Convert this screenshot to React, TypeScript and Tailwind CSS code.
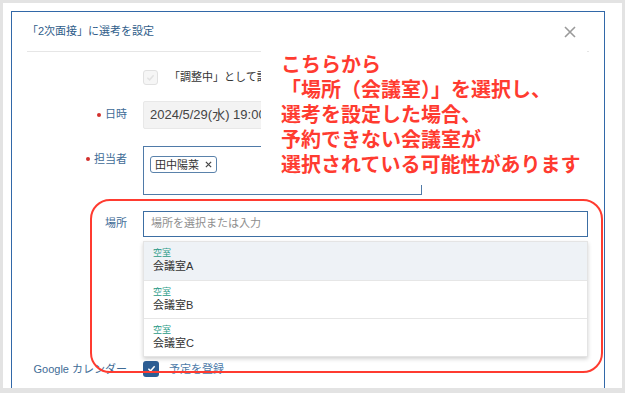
import React from "react";

const FONT = "font-['Liberation_Sans','Noto_Sans_CJK_JP',sans-serif]";

const ROOMS = ["会議室A", "会議室B", "会議室C"];

function Label({ text, required }: { text: string; required?: boolean }) {
  return (
    <div className="flex w-[115px] shrink-0 items-center justify-end gap-[4px] text-[11px] whitespace-nowrap text-[#3e6b96]">
      {required && <span className="h-[4px] w-[4px] rounded-full bg-[#d3302c]" />}
      <span>{text}</span>
    </div>
  );
}

function CloseIcon() {
  return (
    <svg width="12" height="12" viewBox="0 0 12 12" className="text-[#9a9a9a]">
      <path d="M1 1L11 11M11 1L1 11" stroke="currentColor" strokeWidth="1.6" />
    </svg>
  );
}

function Check({ color }: { color: string }) {
  return (
    <svg width="9" height="9" viewBox="0 0 10 10">
      <path d="M1.5 5.2L4 7.6L8.5 2.4" fill="none" stroke={color} strokeWidth="1.6" />
    </svg>
  );
}

export default function App() {
  return (
    <div
      className={`relative h-[393px] w-[625px] overflow-hidden border-t-[3px] border-r-[3px] border-b-[5px] border-l-[3px] border-[#e3e3e3] bg-white pt-[8px] pr-[17px] pl-[8px] ${FONT}`}
    >
      <div className="h-[400px] border-t border-r border-l border-[#3268a8] bg-white">
        {/* header */}
        <div className="mx-[15px] flex h-[40px] items-center justify-between border-b border-[#e6e6e6] pr-[13px]">
          <span className="text-[11px] text-[#2f5d8a]">「2次面接」に選考を設定</span>
          <CloseIcon />
        </div>

        <div className="flex flex-col pr-[16px]">
          <div className="mt-[17px] flex items-center gap-[16px]">
            <div className="w-[115px] shrink-0" />
            <div className="flex items-center gap-[11px]">
              <span className="flex h-[15px] w-[15px] items-center justify-center rounded-[3px] border border-[#e1e1e1] bg-[#f6f6f6]">
                <Check color="#e2e2e2" />
              </span>
              <span className="text-[11px] text-[#333]">「調整中」として設定する</span>
            </div>
          </div>

          <div className="mt-[15px] flex items-center gap-[16px]">
            <Label text="日時" required />
            <div className="flex h-[28px] w-[279px] items-center rounded-[2px] border border-[#e8e8e8] bg-[#f3f3f3] pl-[6px] text-[13px] text-[#444]">
              2024/5/29(水) 19:00 〜 20:00
            </div>
          </div>

          <div className="mt-[17px] flex items-start gap-[16px]">
            <div className="pt-[5px]">
              <Label text="担当者" required />
            </div>
            <div className="h-[49px] w-[279px] border border-[#4f7aa8] pt-[5px] pl-[6px]">
              <span className="inline-flex h-[17px] items-center gap-[6px] rounded-[3px] border border-[#5a82ab] px-[4px] text-[11px] text-[#333]">
                田中陽菜
                <svg width="7" height="7" viewBox="0 0 8 8">
                  <path d="M1 1L7 7M7 1L1 7" stroke="#444" strokeWidth="1.4" />
                </svg>
              </span>
            </div>
          </div>

          <div className="mt-[16px] flex items-start gap-[16px]">
            <div className="flex h-[26px] items-center">
              <Label text="場所" />
            </div>
            <div className="flex flex-1 flex-col">
              <div className="flex h-[26px] items-center border border-[#3c6ea3] pl-[7px] text-[11px] text-[#8e8e8e]">
                場所を選択または入力
              </div>
              <div className="mt-[4px] flex flex-col border border-[#e4e4e4] bg-white shadow-[0_2px_4px_rgba(0,0,0,0.18)]">
                {ROOMS.map((room, i) => (
                  <div
                    key={room}
                    className={`flex h-[38px] flex-col justify-center pl-[9px] ${i === 0 ? "bg-[#eef2f6]" : "border-t border-[#e6e6e6] bg-white"}`}
                  >
                    <span className="text-[9px] leading-[12px] text-[#2b9a86]">空室</span>
                    <span className="text-[11px] leading-[15px] text-[#333]">{room}</span>
                  </div>
                ))}
              </div>
            </div>
          </div>

          <div className="mt-[4px] flex items-center gap-[16px]">
            <Label text="Google カレンダー" />
            <div className="flex items-center gap-[10px]">
              <span className="flex h-[16px] w-[16px] items-center justify-center rounded-[3px] bg-[#2c5d93]">
                <Check color="#ffffff" />
              </span>
              <span className="text-[11px] text-[#4b7aa8]">予定を登録</span>
            </div>
          </div>
        </div>
      </div>

      {/* annotation callout */}
      <div className="absolute top-[39px] left-[258px] h-[143px] w-[326px] bg-white pt-[9px] pl-[20px] font-['Noto_Sans_CJK_JP',sans-serif] text-[20px] leading-[25px] font-semibold text-[#ff3b30]">
        <p>こちらから</p>
        <p>「場所（会議室）」を選択し、</p>
        <p>選考を設定した場合、</p>
        <p>予約できない会議室が</p>
        <p>選択されている可能性があります</p>
      </div>

      {/* annotation frame */}
      <div className="pointer-events-none absolute top-[196px] left-[87px] h-[174px] w-[513px] rounded-[20px] border-2 border-[#ff3b30]" />
    </div>
  );
}
